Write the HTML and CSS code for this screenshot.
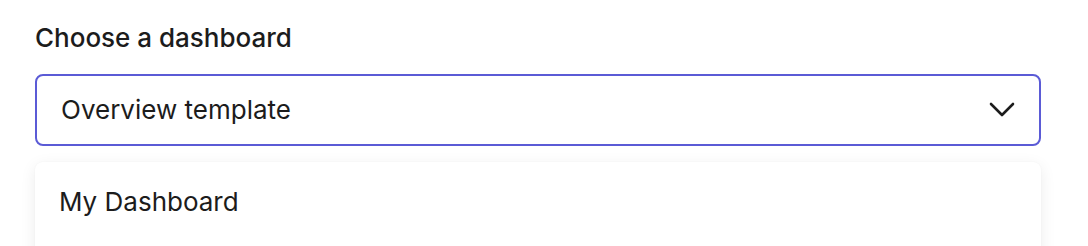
FILE: index.html
```html
<!DOCTYPE html>
<html lang="en">
<head>
    <meta charset="UTF-8">
    <meta name="viewport" content="width=device-width, initial-scale=1.0">
    <title>Choose a dashboard</title>
    <link rel="stylesheet" href="styles.css">
</head>
<body>

    <div class="field">
        <label class="field-label" for="dashboard">Choose a dashboard</label>

        <button type="button" id="dashboard" class="select">
            <span class="select-value">Overview template</span>
            <svg class="chevron" width="26" height="16" viewBox="0 0 26 16" aria-hidden="true">
                <polyline points="2,2 13,13 24,2" fill="none" stroke="#1c1c1c" stroke-width="2.6" stroke-linecap="round" stroke-linejoin="round"/>
            </svg>
        </button>

        <ul class="menu">
            <li class="menu-item">My Dashboard</li>
        </ul>
    </div>

</body>
</html>
```

FILE: styles.css
```css
body {
    margin: 0;
    font-family: Inter, "Noto Sans", sans-serif;
    background-color: #ffffff;
    color: #1c1c1c;
    overflow: hidden;
}

.field {
    width: 1006px;
    padding: 22px 0 0 35px;
    display: flex;
    flex-direction: column;
}

.field-label {
    font-size: 26px;
    line-height: 32px;
    font-weight: 500;
    margin-bottom: 20px;
}

.select {
    display: flex;
    align-items: center;
    justify-content: space-between;
    height: 72px;
    padding: 0 26px 0 24px;
    border: 2px solid #5b5bd6;
    border-radius: 8px;
    background-color: #ffffff;
    font-family: inherit;
    font-size: 26px;
    color: #1c1c1c;
    box-sizing: border-box;
    cursor: pointer;
}

.select-value {
    line-height: 32px;
}

.chevron {
    display: block;
    margin-right: -2px;
}

.menu {
    list-style: none;
    margin: 16px 0 0;
    padding: 8px 0;
    min-height: 120px;
    border-radius: 8px;
    background-color: #ffffff;
    box-shadow: 0 4px 16px rgba(0, 0, 0, 0.08), 0 0 2px rgba(0, 0, 0, 0.04);
}

.menu-item {
    padding: 16px 24px;
    font-size: 26px;
    line-height: 32px;
}
```
